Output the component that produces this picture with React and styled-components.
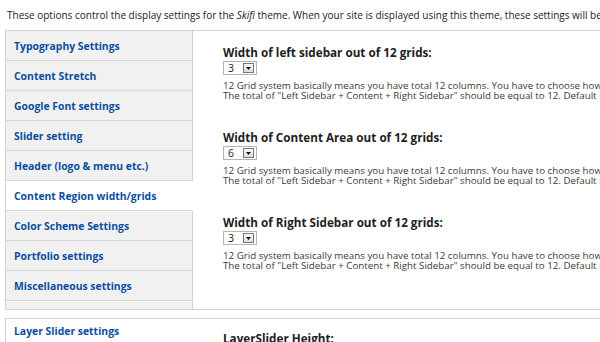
import styled, { createGlobalStyle } from "styled-components";

const GlobalStyle = createGlobalStyle`
  html, body {
    margin: 0;
    padding: 0;
    background: #fff;
    overflow: hidden;
  }
  body {
    font-family: "Open Sans", "DejaVu Sans", sans-serif;
    width: 600px;
    height: 342px;
  }
`;

const tabs = [
  "Typography Settings",
  "Content Stretch",
  "Google Font settings",
  "Slider setting",
  "Header (logo & menu etc.)",
  "Content Region width/grids",
  "Color Scheme Settings",
  "Portfolio settings",
  "Miscellaneous settings",
];

const gridFields = [
  { label: "Width of left sidebar out of 12 grids:", value: "3" },
  { label: "Width of Content Area out of 12 grids:", value: "6" },
  { label: "Width of Right Sidebar out of 12 grids:", value: "3" },
];

const Page = styled.div`
  width: 600px;
  height: 342px;
  overflow: hidden;
`;

const Intro = styled.p`
  margin: 0;
  padding: 9px 0 0 7px;
  height: 21px;
  font-size: 10px;
  line-height: 12px;
  color: #222;
  white-space: nowrap;
  overflow: hidden;

  em {
    font-style: italic;
  }
`;

const Panel = styled.div`
  display: flex;
  width: 900px;
  margin-left: 5px;
  border-top: 1px solid #d2d2d2;
  border-bottom: ${p => (p.$open ? "none" : "1px solid #d2d2d2")};
  border-left: 1px solid #d2d2d2;
  margin-bottom: ${p => (p.$gap ? "8px" : "0")};
`;

const Sidebar = styled.ul`
  list-style: none;
  margin: 0;
  padding: 0;
  width: 187px;
  flex-shrink: 0;
  display: flex;
  flex-direction: column;
`;

const Tab = styled.li`
  height: ${p => (p.$short ? "23px" : "29px")};
  display: flex;
  align-items: center;
  padding-left: 8px;
  font-size: 10.4px;
  font-weight: 700;
  color: #0b4e9f;
  background: ${p => (p.$active ? "#fff" : "#f1f1f1")};
  border-bottom: ${p => (p.$short ? "none" : "1px solid #d6d6d6")};
  border-right: ${p => (p.$active ? "1px solid transparent" : "1px solid #d2d2d2")};
  white-space: nowrap;
`;

const TabFiller = styled.li`
  flex: 1;
  min-height: 7px;
  background: #f1f1f1;
  border-right: 1px solid #d2d2d2;
  border-top: 1px solid #fff;
`;

const Content = styled.div`
  flex: 1;
  min-width: 0;
  overflow: hidden;
  padding: ${p => (p.$tight ? "12px" : "14px")} 0 0 30px;
  display: flex;
  flex-direction: column;
  gap: 29px;
`;

const Field = styled.div`
  display: flex;
  flex-direction: column;
`;

const Heading = styled.h3`
  margin: 0 0 2px;
  font-size: 11.7px;
  font-weight: 700;
  line-height: 14px;
  color: #1e1e1e;
  white-space: nowrap;
`;

const Select = styled.div`
  width: 34px;
  height: 14px;
  box-sizing: border-box;
  border: 1px solid #b4b4b4;
  display: flex;
  align-items: center;
  justify-content: space-between;
  padding: 0 2px 0 4px;
  font-size: 10.5px;
  color: #222;
  background: #fff;
`;

const SelectButton = styled.span`
  width: 11px;
  height: 10px;
  box-sizing: border-box;
  border: 1px solid #777;
  background: linear-gradient(#fafafa, #dcdcdc);
  display: flex;
  align-items: center;
  justify-content: center;
`;

const Help = styled.p`
  margin: 6px 0 0;
  font-size: 9.75px;
  line-height: 10px;
  color: #3a3a3a;
  white-space: nowrap;
`;

const Caret = () => (
  <svg width="5" height="3" viewBox="0 0 5 3">
    <path d="M0 0h5L2.5 3z" fill="#111" />
  </svg>
);

function GridSelect({ value }) {
  return (
    <Select>
      <span>{value}</span>
      <SelectButton>
        <Caret />
      </SelectButton>
    </Select>
  );
}

export default function App() {
  return (
    <Page>
      <GlobalStyle />
      <Intro>
        These options control the display settings for the <em>Skifi</em> theme. When your
        site is displayed using this theme, these settings will be used.
      </Intro>

      <Panel $gap>
        <Sidebar>
          {tabs.map(t => (
            <Tab key={t} $active={t === "Content Region width/grids"}>
              {t}
            </Tab>
          ))}
          <TabFiller />
        </Sidebar>
        <Content>
          {gridFields.map(f => (
            <Field key={f.label}>
              <Heading>{f.label}</Heading>
              <GridSelect value={f.value} />
              <Help>
                12 Grid system basically means you have total 12 columns. You have to choose how
                many columns each region takes.
                <br />
                The total of "Left Sidebar + Content + Right Sidebar" should be equal to 12. Default
                is 3 + 6 + 3.
              </Help>
            </Field>
          ))}
        </Content>
      </Panel>

      <Panel $open>
        <Sidebar>
          <Tab $active $short>
            Layer Slider settings
          </Tab>
        </Sidebar>
        <Content $tight>
          <Field>
            <Heading>LayerSlider Height:</Heading>
          </Field>
        </Content>
      </Panel>
    </Page>
  );
}
